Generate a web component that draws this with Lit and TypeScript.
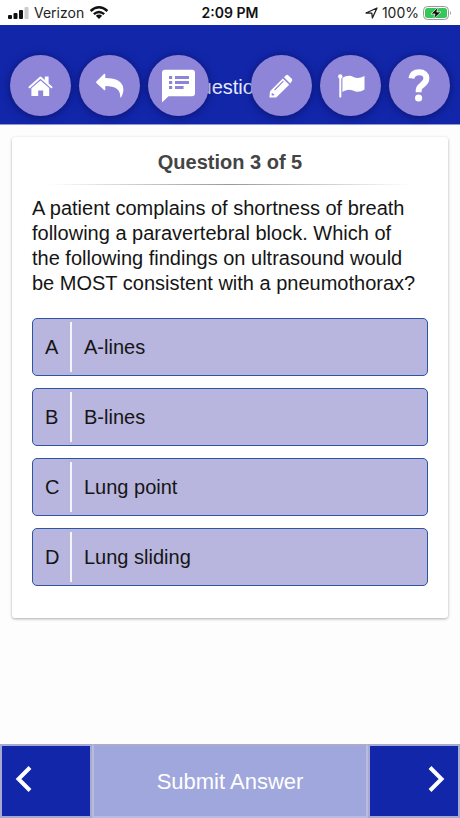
import { LitElement, html, css, svg } from "lit";
import { customElement, property, state } from "lit/decorators.js";

const icons: Record<string, unknown> = {
  home: svg`<path fill="none" stroke="currentColor" stroke-width="2" stroke-linecap="round" stroke-linejoin="round" d="M19.5 32.3 L30.5 22.6 L41.5 32.3"/>
    <path fill="currentColor" d="M34.8 21.6 H38.6 V29 L34.8 25.6 Z M21.4 33.2 L30.5 25.4 L39.2 33 V41 H33.2 V35.4 H28.2 V41 H21.4 Z"/>`,
  back: svg`<path fill="currentColor" d="M17.4 26.4 L25 19 Q26.3 18.2 26.3 19.8 V23 C38 23 43.5 27 44.3 33 C44.8 36.5 43.6 40 42 42.4 Q41 43 41.2 41.6 C41.6 35 36.5 31 26.3 31 V34.2 Q26.3 35.8 25 34.9 L17.4 28 Q16.7 27.2 17.4 26.4 Z"/>`,
  list: svg`<path fill="currentColor" fill-rule="evenodd" d="M17 14.8 H44 Q47 14.8 47 17.8 V38.2 Q47 41.2 44 41.2 H20.5 L14 47.5 V17.8 Q14 14.8 17 14.8 Z M21 21 V24 H24.2 V21 Z M27 21 V24 H41 V21 Z M21 26 V29 H24.2 V26 Z M27 26 V29 H41 V26 Z M21 31 V34 H24.2 V31 Z M27 31 V34 H35.6 V31 Z"/>`,
  pencil: svg`<path fill="currentColor" fill-rule="evenodd" d="M18.4 42.6 L19 36.2 L31.8 23.4 L38.2 29.8 L25.2 42.6 Z M23.2 34.6 L32 25.8 L32.8 26.6 L24 35.4 Z M20.8 38 L20.6 40.4 L22.6 40.6 L23.6 39.4 Z"/>
    <path fill="currentColor" d="M33 22.2 L35 20.2 Q36.2 19.4 37.4 20.4 L40.8 23.8 Q41.8 25 40.8 26.2 L39.2 28.6 Z"/>`,
  flag: svg`<circle cx="20.3" cy="21.4" r="2.2" fill="currentColor"/><path fill="currentColor" d="M19.3 22 H21.3 V42 Q20.3 43.2 19.3 42 Z M22.4 23 C26 20.6 30 20 34 22.2 C37.6 23.8 40.5 22.8 44.5 21 V34.6 C40.5 37 37 37.6 33 35.6 C29 33.8 26 34.8 22.4 37 Z"/>`,
  help: svg`<path fill="none" stroke="currentColor" stroke-width="6" stroke-linejoin="round" d="M22.4 23.4 C23 19.2 25.6 17.2 30.2 17.2 C34.8 17.2 37.4 19.8 37.4 23.2 C37.4 26.4 35.6 28.2 33.2 30 C30.4 32.2 29.6 33.2 29.6 37.2"/><circle cx="29.6" cy="43" r="3.6" fill="currentColor"/>`,
};

@customElement("round-button")
export class RoundButton extends LitElement {
  @property() icon = "";
  @property() name = "";
  static styles = css`
    :host { display: block; }
    button {
      display: block; width: 61px; height: 61px; padding: 0; border: 0;
      border-radius: 50%; background: #8e84d8; color: #fff;
      box-shadow: 0 1px 8px rgba(5, 8, 70, 0.6);
    }
    svg { display: block; width: 100%; height: 100%; }
  `;
  render() {
    return html`<button type="button" aria-label=${this.name}>
      <svg viewBox="0 0 61 61" aria-hidden="true">${icons[this.icon]}</svg>
    </button>`;
  }
}

@customElement("status-bar")
export class StatusBar extends LitElement {
  static styles = css`
    :host {
      display: grid; grid-template-columns: 1fr auto 1fr; align-items: center;
      height: 25px; padding: 0 8px; background: #fff; color: #222;
      font: 14px/24px Inter, sans-serif;
    }
    .side { display: flex; align-items: center; gap: 5px; }
    .end { justify-content: flex-end; gap: 4px; }
    .time { color: #111; font-weight: 600; }
    svg { display: block; flex: none; }
  `;
  render() {
    return html`
      <div class="side">
        <svg width="21" height="12" viewBox="0 0 21 12" aria-hidden="true">
          <g fill="#111"><rect y="8" width="4" height="4" rx="1"/><rect x="5.5" y="6" width="4" height="6" rx="1"/><rect x="11" y="3" width="4" height="9" rx="1"/></g>
          <rect x="16.5" width="4" height="12" rx="1" fill="#ccc"/>
        </svg>
        <span>Verizon</span>
        <svg width="20" height="13" viewBox="0 0 20 13" aria-hidden="true">
          <g fill="none" stroke="#111" stroke-width="2.4"><path d="M1.6 5 Q10 -2.4 18.4 5"/><path d="M4.8 8.2 Q10 3.8 15.2 8.2"/></g>
          <path fill="#111" d="M6.8 9.8 Q10 7.4 13.2 9.8 L10 13 Z"/>
        </svg>
      </div>
      <span class="time">2:09 PM</span>
      <div class="side end">
        <svg width="13" height="12" viewBox="0 0 13 12" aria-hidden="true"><path fill="none" stroke="#222" stroke-width="1.3" stroke-linejoin="round" d="M1 6 L12 1 L7.4 11 L6.8 6.2 Z"/></svg>
        <span>100%</span>
        <svg width="29" height="14" viewBox="0 0 29 14" aria-hidden="true">
          <rect x=".5" y=".5" width="25" height="13" rx="4" fill="#fff" stroke="#999"/>
          <rect x="2" y="2" width="22" height="10" rx="2.5" fill="#35c759"/>
          <path d="M27 5 Q29 7 27 9 Z" fill="#999"/>
          <path d="M15.2 1 L8 8 H12 L10.6 13 L18 6 H13.8 Z" fill="#111" stroke="#fff" stroke-width=".7"/>
        </svg>
      </div>`;
  }
}

@customElement("app-root")
export class AppRoot extends LitElement {
  @state() private selected = "";
  private answers = [
    ["A", "A-lines"],
    ["B", "B-lines"],
    ["C", "Lung point"],
    ["D", "Lung sliding"],
  ];
  static styles = css`
    :host {
      display: flex; flex-direction: column; min-height: 100vh;
      background: #fdfdfd; color: #151515;
      font: 20px/25px "Liberation Sans", Arial, sans-serif;
    }
    * { box-sizing: border-box; }
    header {
      display: grid; padding: 30px 10px 8px; background: #1226aa;
      border-bottom: 1px solid #8f98d4;
    }
    header > * { grid-area: 1 / 1; }
    h1 { margin: 0; align-self: center; padding-top: 4px; text-align: center; font-size: 20px; font-weight: 400; color: #e8eaff; }
    nav { display: flex; justify-content: space-between; z-index: 1; }
    .group { display: flex; gap: 8px; }
    main {
      margin: 12px; padding: 13px 20px 32px; background: #fff; border-radius: 3px;
      box-shadow: 0 1px 3px rgba(0, 0, 0, 0.32);
    }
    h2 { margin: 0; text-align: center; font-size: 20px; color: #444; }
    hr { height: 1px; margin: 9px 16px 11px; border: 0; background: linear-gradient(90deg, transparent, #999, transparent); }
    p { margin: 0; padding-right: 8px; }
    .answers { display: grid; gap: 12px; margin-top: 22px; }
    .answer {
      position: relative; display: flex; align-items: stretch; height: 58px; padding: 3px 0;
      border: 1px solid #2b56a4; border-radius: 5px; background: #b8b6de;
      line-height: 50px;
    }
    .answer input { position: absolute; inset: 0; margin: 0; appearance: none; border-radius: 4px; }
    .letter { width: 39px; padding-left: 12px; border-right: 2px solid #f4f4ff; }
    .text { padding-left: 12px; }
    footer { display: grid; grid-template-columns: 1fr 3fr 1fr; margin-top: auto; height: 74px; }
    footer button {
      display: flex; align-items: center; justify-content: center; min-width: 0; padding: 0 13px 4px;
      border: 2px solid #a6aad0; background: #1226aa; color: #fff; font: 22px/28px "Liberation Sans", Arial, sans-serif;
    }
    footer .submit { padding: 2px 0 0; background: #a0a7dd; border-color: #a9adcb #b9bce0 #b9bce0; }
    footer .prev { justify-content: flex-start; }
    footer .next { justify-content: flex-end; }
  `;
  render() {
    return html`
      <status-bar></status-bar>
      <header>
        <h1>Questions</h1>
        <nav>
          <div class="group">
            <round-button icon="home" name="Home"></round-button>
            <round-button icon="back" name="Back"></round-button>
            <round-button icon="list" name="Question list"></round-button>
          </div>
          <div class="group">
            <round-button icon="pencil" name="Notes"></round-button>
            <round-button icon="flag" name="Flag"></round-button>
            <round-button icon="help" name="Help"></round-button>
          </div>
        </nav>
      </header>
      <main>
        <h2>Question 3 of 5</h2>
        <hr />
        <p id="question">A patient complains of shortness of breath following a paravertebral block. Which of the following findings on ultrasound would be MOST consistent with a pneumothorax?</p>
        <div class="answers" role="radiogroup" aria-labelledby="question">
          ${this.answers.map(([letter, text]) => html`
            <label class="answer">
              <input type="radio" name="answer" .checked=${this.selected === letter} @change=${() => (this.selected = letter)} />
              <span class="letter">${letter}</span>
              <span class="text">${text}</span>
            </label>`)}
        </div>
      </main>
      <footer>
        <button class="prev" type="button" aria-label="Previous question">
          <svg width="18" height="28" viewBox="0 0 18 28" aria-hidden="true"><path fill="none" stroke="#fff" stroke-width="4" d="M15 2.5 L3.5 14 L15 25.5"/></svg>
        </button>
        <button class="submit" type="button">Submit Answer</button>
        <button class="next" type="button" aria-label="Next question">
          <svg width="18" height="28" viewBox="0 0 18 28" aria-hidden="true"><path fill="none" stroke="#fff" stroke-width="4" d="M3 2.5 L14.5 14 L3 25.5"/></svg>
        </button>
      </footer>`;
  }
}
